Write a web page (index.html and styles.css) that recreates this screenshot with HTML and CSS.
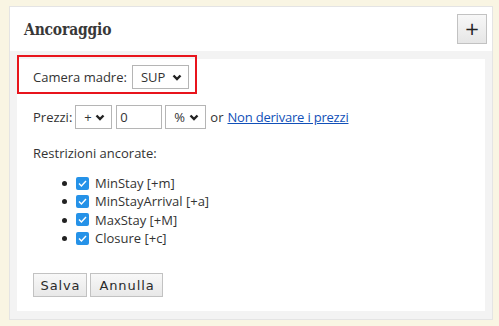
FILE: index.html
```html
<!DOCTYPE html>
<html>
<head>
<meta charset="utf-8">
<link rel="stylesheet" href="styles.css">
</head>
<body>
<div class="panel">
  <div class="panel-head">
    <h2 class="title">Ancoraggio</h2>
    <button class="plus">+</button>
  </div>
  <div class="panel-body">
    <div class="content">
      <div class="row row-camera">
        <span class="label">Camera madre:</span>
        <span class="select sel-sup">SUP<svg class="chev" width="10" height="7" viewBox="0 0 10 7"><path d="M1.5 1.5 L5 5 L8.5 1.5" fill="none" stroke="#222" stroke-width="2.4"/></svg></span>
        <div class="highlight"></div>
      </div>
      <div class="row row-prezzi">
        <span class="label label-p">Prezzi:</span>
        <span class="select sel-plus">+<svg class="chev" width="10" height="7" viewBox="0 0 10 7"><path d="M1.5 1.5 L5 5 L8.5 1.5" fill="none" stroke="#222" stroke-width="2.4"/></svg></span>
        <span class="input">0</span>
        <span class="select sel-pct">%<svg class="chev" width="10" height="7" viewBox="0 0 10 7"><path d="M1.5 1.5 L5 5 L8.5 1.5" fill="none" stroke="#222" stroke-width="2.4"/></svg></span>
        <span class="or">or</span>
        <a class="link" href="#">Non derivare i prezzi</a>
      </div>
      <p class="restr">Restrizioni ancorate:</p>
      <ul class="list">
        <li><span class="cb"><svg width="13" height="13" viewBox="0 0 13 13"><path d="M3 6.6 L5.4 9 L10 4" fill="none" stroke="#fff" stroke-width="1.4"/></svg></span>MinStay [+m]</li>
        <li><span class="cb"><svg width="13" height="13" viewBox="0 0 13 13"><path d="M3 6.6 L5.4 9 L10 4" fill="none" stroke="#fff" stroke-width="1.4"/></svg></span>MinStayArrival [+a]</li>
        <li><span class="cb"><svg width="13" height="13" viewBox="0 0 13 13"><path d="M3 6.6 L5.4 9 L10 4" fill="none" stroke="#fff" stroke-width="1.4"/></svg></span>MaxStay [+M]</li>
        <li><span class="cb"><svg width="13" height="13" viewBox="0 0 13 13"><path d="M3 6.6 L5.4 9 L10 4" fill="none" stroke="#fff" stroke-width="1.4"/></svg></span>Closure [+c]</li>
      </ul>
      <div class="buttons">
        <button class="btn btn-salva">Salva</button>
        <button class="btn btn-annulla">Annulla</button>
      </div>
    </div>
  </div>
</div>
</body>
</html>
```

FILE: styles.css
```css
html, body {
  margin: 0;
  padding: 0;
}
body {
  background: #f9f5e3;
  font-family: "Open Sans", sans-serif;
  font-size: 13px;
  color: #333;
  padding: 6px 6px 6px 9px;
  height: 326px;
  box-sizing: border-box;
}
.panel {
  border: 1px solid #e4e4e4;
  background: #f3f3f3;
  height: 314px;
  box-sizing: border-box;
  display: flex;
  flex-direction: column;
}
.panel-head {
  background: #fff;
  height: 44px;
  display: flex;
  align-items: center;
  justify-content: space-between;
  padding: 0 5px 0 14px;
}
.title {
  margin: 0;
  font-family: "DejaVu Serif", serif;
  font-size: 16px;
  font-weight: bold;
  color: #383838;
  letter-spacing: -0.2px;
  transform: scaleX(0.87);
  transform-origin: left center;
}
.plus {
  width: 30px;
  height: 30px;
  border: 1px solid #c2c2c2;
  background: linear-gradient(#f7f7f7, #e6e6e6);
  font-family: "DejaVu Sans", sans-serif;
  font-size: 18px;
  color: #222;
  padding: 0;
  line-height: 26px;
}
.panel-body {
  flex: 1;
  padding: 8px 7px;
  display: flex;
}
.content {
  flex: 1;
  background: #fff;
  padding: 6px 16px 0;
}
.row {
  display: flex;
  align-items: center;
  height: 24px;
}
.row-camera {
  position: relative;
}
.highlight {
  position: absolute;
  left: -16px;
  top: -10px;
  width: 180px;
  height: 39px;
  border: 2px solid #e8141c;
  box-sizing: border-box;
}
.label {
  margin-right: 5px;
}
.label-p {
  margin-right: 3px;
}
.select {
  display: inline-flex;
  align-items: center;
  justify-content: space-between;
  height: 24px;
  box-sizing: border-box;
  border: 1px solid #b5b5b5;
  background: #fff;
  padding: 0 6px 0 8px;
}
.sel-sup { width: 57px; }
.sel-plus { width: 37px; }
.sel-pct { width: 41px; }
.chev { display: block; }
.input {
  display: inline-flex;
  align-items: center;
  width: 46px;
  height: 24px;
  box-sizing: border-box;
  border: 1px solid #b5b5b5;
  padding-left: 3px;
  margin: 0 3px 0 4px;
}
.row-prezzi {
  margin-top: 16px;
}
.or {
  margin: 0 4px 0 4px;
}
.link {
  color: #1150b8;
  text-decoration: underline;
  letter-spacing: -0.2px;
}
.restr {
  margin: 15px 0 0;
  line-height: 18px;
}
.list {
  margin: 12px 0 0;
  padding-left: 43px;
  line-height: 18px;
}
.list li {
  display: flex;
  align-items: center;
  position: relative;
  height: 18.3px;
}
.list li::before {
  content: "";
  position: absolute;
  left: -14px;
  top: 7px;
  width: 5px;
  height: 5px;
  border-radius: 50%;
  background: #222;
}
.cb {
  width: 13px;
  height: 13px;
  border-radius: 2px;
  background: #2592e8;
  margin-right: 6px;
  display: block;
}
.cb svg { display: block; }
.buttons {
  margin-top: 26px;
  display: flex;
  gap: 3px;
}
.btn {
  font-family: "DejaVu Sans", sans-serif;
  font-size: 13px;
  letter-spacing: 0.9px;
  color: #2a2a2a;
  height: 24px;
  padding: 0 0 0 1px;
  border: 1px solid #c2c2c2;
  background: linear-gradient(#f8f8f8, #e8e8e8);
}
.btn-salva { width: 54px; }
.btn-annulla { width: 73px; }
```
